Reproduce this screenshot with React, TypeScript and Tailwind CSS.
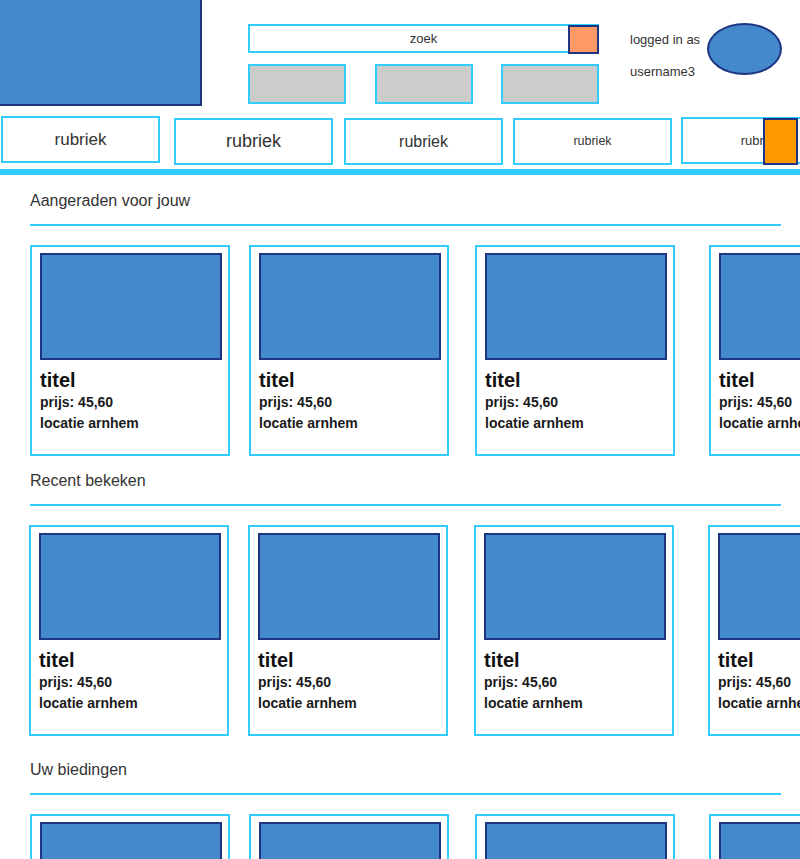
const cardGaps = ["", "ml-[19px]", "ml-[26px]", "ml-[34px]"];

const sections = [
  { title: "Aangeraden voor jouw", top: "mt-[17px]", row: "ml-[30px]" },
  { title: "Recent bekeken", top: "mt-[16px]", row: "ml-[29px]" },
  { title: "Uw biedingen", top: "mt-[25px]", row: "ml-[30px]" },
];

function Card({ gap }: { gap: string }) {
  return (
    <div className={`w-[200px] h-[211px] shrink-0 border-2 border-[#33ccff] pl-[8px] pt-[6px] ${gap}`}>
      <div className="w-[182px] h-[107px] border-2 border-[#1e3582] bg-[#4489cc]" />
      <div className="mt-[8px] text-[20px] leading-[24px] font-bold text-[#111]">titel</div>
      <div className="text-[14px] leading-[20px] font-bold text-[#1a1a1a]">prijs: 45,60</div>
      <div className="text-[14px] leading-[22px] font-bold text-[#1a1a1a]">locatie arnhem</div>
    </div>
  );
}

function Section({ title, top, row }: { title: string; top: string; row: string }) {
  return (
    <section className={top}>
      <h2 className="pl-[30px] text-[16px] leading-[18px] text-[#333]">{title}</h2>
      <div className="ml-[30px] mt-[14px] h-[2px] w-[751px] bg-[#33ccff]" />
      <div className={`mt-[19px] flex ${row}`}>
        {cardGaps.map((g, i) => (
          <Card key={i} gap={g} />
        ))}
      </div>
    </section>
  );
}

export default function App() {
  return (
    <div className="h-[859px] w-full overflow-hidden bg-white font-['Liberation_Sans',Arial,sans-serif]">
      {/* header */}
      <header className="flex h-[106px]">
        <div className="h-[106px] w-[202px] shrink-0 border-b-2 border-r-2 border-[#1e3582] bg-[#4489cc]" />

        <div className="ml-[46px] pt-[24px]">
          <div className="relative h-[29px] w-[351px] border-2 border-[#33ccff] text-center text-[13px] leading-[25px] text-[#333]">
            zoek
            <div className="absolute right-[-2px] top-[-1px] h-[29px] w-[31px] border-2 border-[#1e3582] bg-[#ff9966]" />
          </div>
          <div className="mt-[11px] flex w-[351px] justify-between">
            <div className="h-[40px] w-[98px] border-2 border-[#33ccff] bg-[#cccccc]" />
            <div className="h-[40px] w-[98px] border-2 border-[#33ccff] bg-[#cccccc]" />
            <div className="h-[40px] w-[98px] border-2 border-[#33ccff] bg-[#cccccc]" />
          </div>
        </div>

        <div className="ml-[31px] flex items-start">
          <div className="mt-[32px] w-[77px] text-[13px] leading-[16px] text-[#333]">
            <div>logged in as</div>
            <div className="mt-[16px]">username3</div>
          </div>
          <div className="mt-[23px] h-[52px] w-[75px] rounded-[50%] border-2 border-[#1e3582] bg-[#4489cc]" />
        </div>
      </header>

      {/* rubrieken */}
      <nav className="flex h-[59px] items-start text-[#333]">
        <div className="ml-[1px] mt-[10px] flex h-[47px] w-[159px] shrink-0 items-center justify-center border-2 border-[#33ccff] text-[17px]">
          rubriek
        </div>
        <div className="ml-[14px] mt-[12px] flex h-[47px] w-[159px] shrink-0 items-center justify-center border-2 border-[#33ccff] text-[18px]">
          rubriek
        </div>
        <div className="ml-[11px] mt-[12px] flex h-[47px] w-[159px] shrink-0 items-center justify-center border-2 border-[#33ccff] text-[16px]">
          rubriek
        </div>
        <div className="ml-[10px] mt-[12px] flex h-[47px] w-[159px] shrink-0 items-center justify-center border-2 border-[#33ccff] text-[12.5px]">
          rubriek
        </div>
        <div className="relative ml-[9px] mt-[11px] flex h-[47px] w-[159px] shrink-0 items-center justify-center border-2 border-[#33ccff] text-[13px]">
          rubriek
          <div className="absolute left-[80px] top-[-1px] h-[47px] w-[35px] border-2 border-[#1e3582] bg-[#ff9900]" />
        </div>
      </nav>
      <div className="mt-[4px] h-[6px] w-full bg-[#33ccff]" />

      {sections.map((s) => (
        <Section key={s.title} title={s.title} top={s.top} row={s.row} />
      ))}
    </div>
  );
}
